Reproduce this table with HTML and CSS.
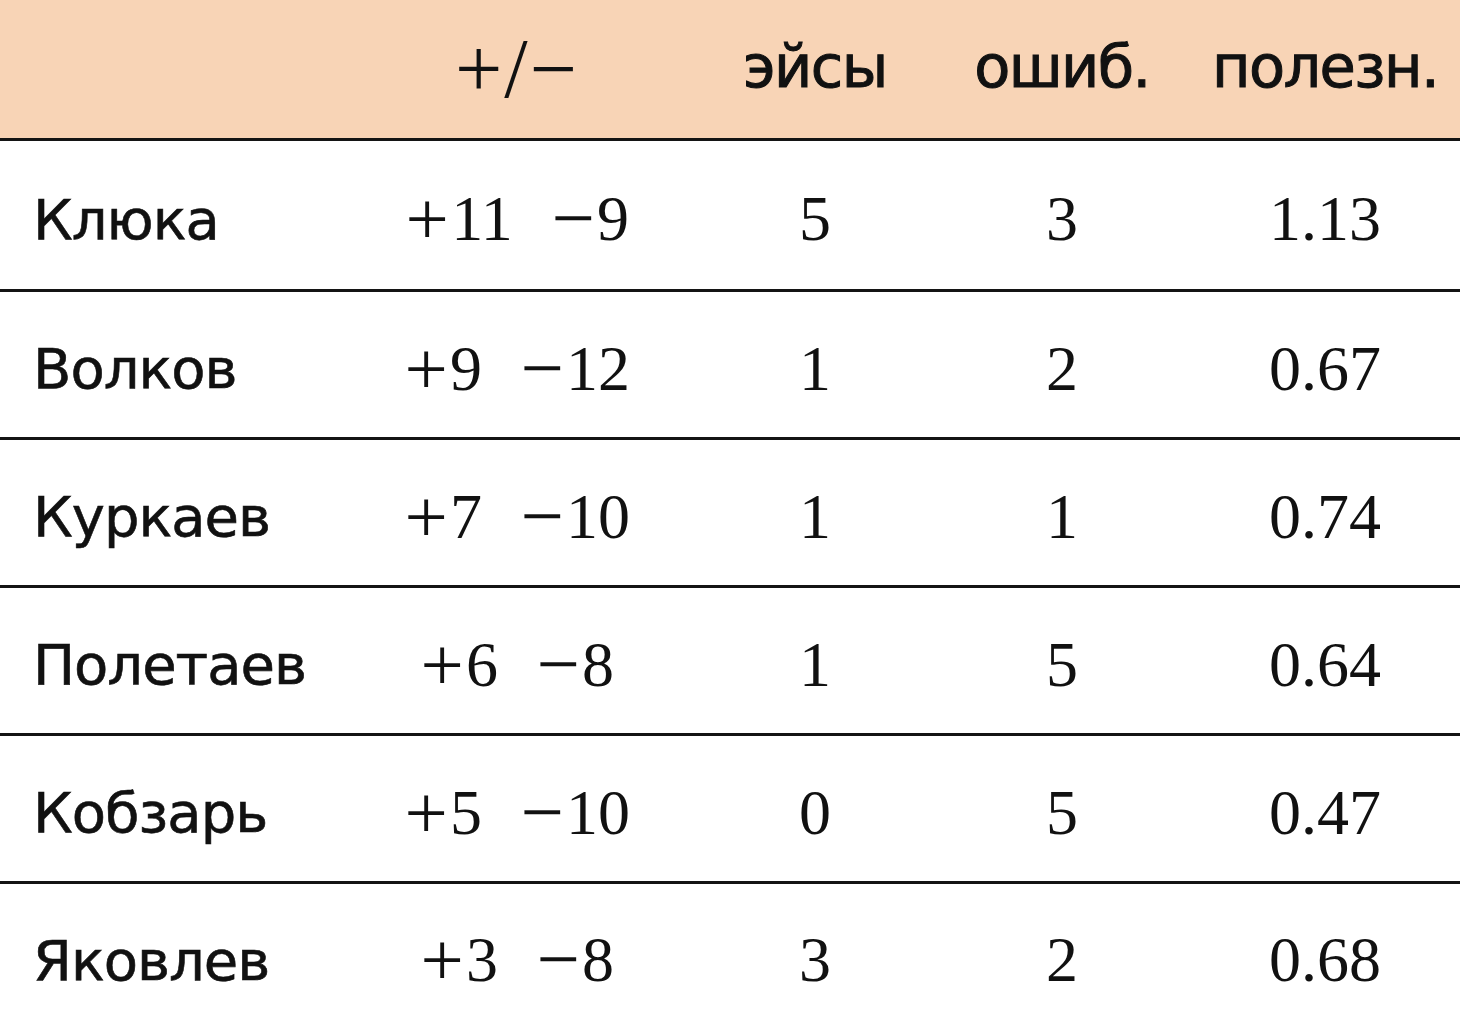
FILE: index.html
```html
<!DOCTYPE html>
<html lang="ru">
<head>
<meta charset="utf-8">
<title>Статистика</title>
<link rel="stylesheet" href="styles.css">
</head>
<body>
<div class="table">
  <div class="row head">
    <div class="cell name"></div>
    <div class="cell num pm">+/−</div>
    <div class="cell label">эйсы</div>
    <div class="cell label">ошиб.</div>
    <div class="cell label">полезн.</div>
  </div>
  <div class="row first">
    <div class="cell name">Клюка</div>
    <div class="cell num"><span class="pair"><span><span class="sign">+</span>11</span><span><span class="sign">−</span>9</span></span></div>
    <div class="cell num">5</div>
    <div class="cell num">3</div>
    <div class="cell num">1.13</div>
  </div>
  <div class="row">
    <div class="cell name">Волков</div>
    <div class="cell num"><span class="pair"><span><span class="sign">+</span>9</span><span><span class="sign">−</span>12</span></span></div>
    <div class="cell num">1</div>
    <div class="cell num">2</div>
    <div class="cell num">0.67</div>
  </div>
  <div class="row">
    <div class="cell name">Куркаев</div>
    <div class="cell num"><span class="pair"><span><span class="sign">+</span>7</span><span><span class="sign">−</span>10</span></span></div>
    <div class="cell num">1</div>
    <div class="cell num">1</div>
    <div class="cell num">0.74</div>
  </div>
  <div class="row">
    <div class="cell name">Полетаев</div>
    <div class="cell num"><span class="pair"><span><span class="sign">+</span>6</span><span><span class="sign">−</span>8</span></span></div>
    <div class="cell num">1</div>
    <div class="cell num">5</div>
    <div class="cell num">0.64</div>
  </div>
  <div class="row">
    <div class="cell name">Кобзарь</div>
    <div class="cell num"><span class="pair"><span><span class="sign">+</span>5</span><span><span class="sign">−</span>10</span></span></div>
    <div class="cell num">0</div>
    <div class="cell num">5</div>
    <div class="cell num">0.47</div>
  </div>
  <div class="row last">
    <div class="cell name">Яковлев</div>
    <div class="cell num"><span class="pair"><span><span class="sign">+</span>3</span><span><span class="sign">−</span>8</span></span></div>
    <div class="cell num">3</div>
    <div class="cell num">2</div>
    <div class="cell num">0.68</div>
  </div>
</div>
</body>
</html>
```
FILE: styles.css
```css
html, body {
  margin: 0;
  padding: 0;
  background: #ffffff;
}
body {
  width: 1460px;
  height: 1025px;
  overflow: hidden;
  color: #111111;
}
.table {
  display: flex;
  flex-direction: column;
}
.row {
  display: grid;
  grid-template-columns: 338px 358px 238px 256px 270px;
  height: 145px;
  border-bottom: 3px solid #141414;
  align-items: center;
}
.row.head {
  height: 138px;
  background: #f8d4b6;
}
.row.first {
  height: 148px;
}
.row.last {
  border-bottom: none;
  height: 144px;
}
.cell {
  white-space: nowrap;
  text-align: center;
  padding-top: 8px;
}
.name {
  text-align: left;
  padding-left: 33px;
  font-family: "DejaVu Sans", Verdana, sans-serif;
  font-size: 56px;
  letter-spacing: -1px;
  -webkit-text-stroke: 0.6px #111111;
}
.num {
  font-family: "Liberation Serif", "Times New Roman", serif;
  font-size: 64px;
}
.sign {
  display: inline-block;
  transform: scale(1.2);
  margin: 0 6px 0 4px;
}
.pair {
  display: inline-flex;
  align-items: baseline;
  gap: 38px;
}
.head .cell {
  padding-top: 0;
}
.label {
  font-family: "DejaVu Sans", Verdana, sans-serif;
  font-size: 59px;
  letter-spacing: -1.6px;
  -webkit-text-stroke: 1px #111111;
  padding-bottom: 6px;
}
.pm {
  font-size: 84px;
  letter-spacing: 2px;
  padding-bottom: 2px;
}
```
